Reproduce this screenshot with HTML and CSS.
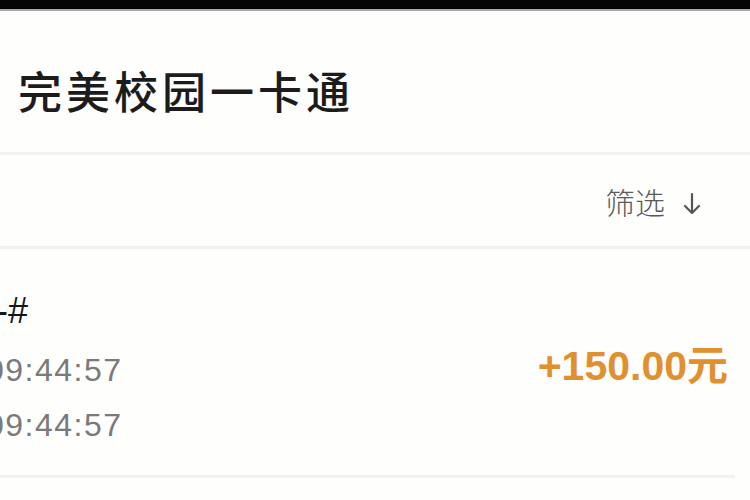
FILE: index.html
```html
<html>
  <head>
    <meta charset="utf-8">
    <link rel="stylesheet" href="styles.css">
  </head>
  <body>
    <div id="statusbar"></div>
    <div id="header">
      <h1 class="title">完美校园一卡通</h1>
    </div>
    <div class="rule"></div>
    <div id="filter">
      <span class="filterLabel">筛选</span>
      <svg class="arrow" width="18" height="24" viewBox="0 0 18 24">
        <path d="M9 2 V21 M2 14 L9 21 L16 14" fill="none" stroke="#555" stroke-width="2.2" stroke-linecap="round" stroke-linejoin="round"/>
      </svg>
    </div>
    <div class="rule"></div>
    <div class="record">
      <div class="recordInfo">
        <p class="recordName">-#</p>
        <p class="recordTime">09:44:57</p>
        <p class="recordTime">09:44:57</p>
      </div>
      <div class="recordAmount">+150.00元</div>
    </div>
    <div class="rule short"></div>
    <div id="rest"></div>
  </body>
</html>
```

FILE: styles.css
```css
html, body{
  margin: 0;
  padding: 0;
  height: 100%;
  overflow: hidden;
  background: #fefefd;
  font-family: "Liberation Sans", "Noto Sans CJK SC", sans-serif;
}
#statusbar{
  height: 9px;
  background: #050505;
  border-bottom: 2px solid #a8a8a8;
}
#header{
  height: 141px;
  display: flex;
  align-items: center;
  padding: 0 18px;
}
.title{
  margin: 16px 0 0 0;
  font-family: "Noto Sans CJK SC", sans-serif;
  font-size: 44px;
  font-weight: 500;
  letter-spacing: 4px;
  color: #1c1c1c;
}
.rule{
  height: 3px;
  background: #f1f1f1;
}
.rule.short{
  margin-right: 15px;
}
#filter{
  height: 91px;
  display: flex;
  align-items: center;
  justify-content: flex-end;
  gap: 16px;
  padding-right: 49px;
  color: #5a5a5a;
}
.filterLabel{
  font-family: "Noto Sans CJK SC", sans-serif;
  font-size: 30px;
  font-weight: 300;
  margin-right: 2px;
}
.arrow{
  margin-top: 6px;
}
.record{
  height: 226px;
  display: flex;
  align-items: flex-start;
  justify-content: space-between;
  padding-right: 22px;
}
.recordInfo{
  margin-left: -14px;
  padding-top: 42px;
}
.recordInfo p{
  margin: 0;
}
.recordName{
  font-size: 36px;
  line-height: 40px;
  color: #161616;
  margin: 0 0 12px 10px !important;
}
.recordTime{
  font-size: 32px;
  letter-spacing: 1.5px;
  color: #7a7a7a;
  line-height: 55px;
}
.recordAmount{
  font-size: 41px;
  line-height: 48px;
  font-weight: bold;
  color: #e0902f;
  margin-top: 93px;
}
#rest{
  background: #fdfdfc;
}
```
